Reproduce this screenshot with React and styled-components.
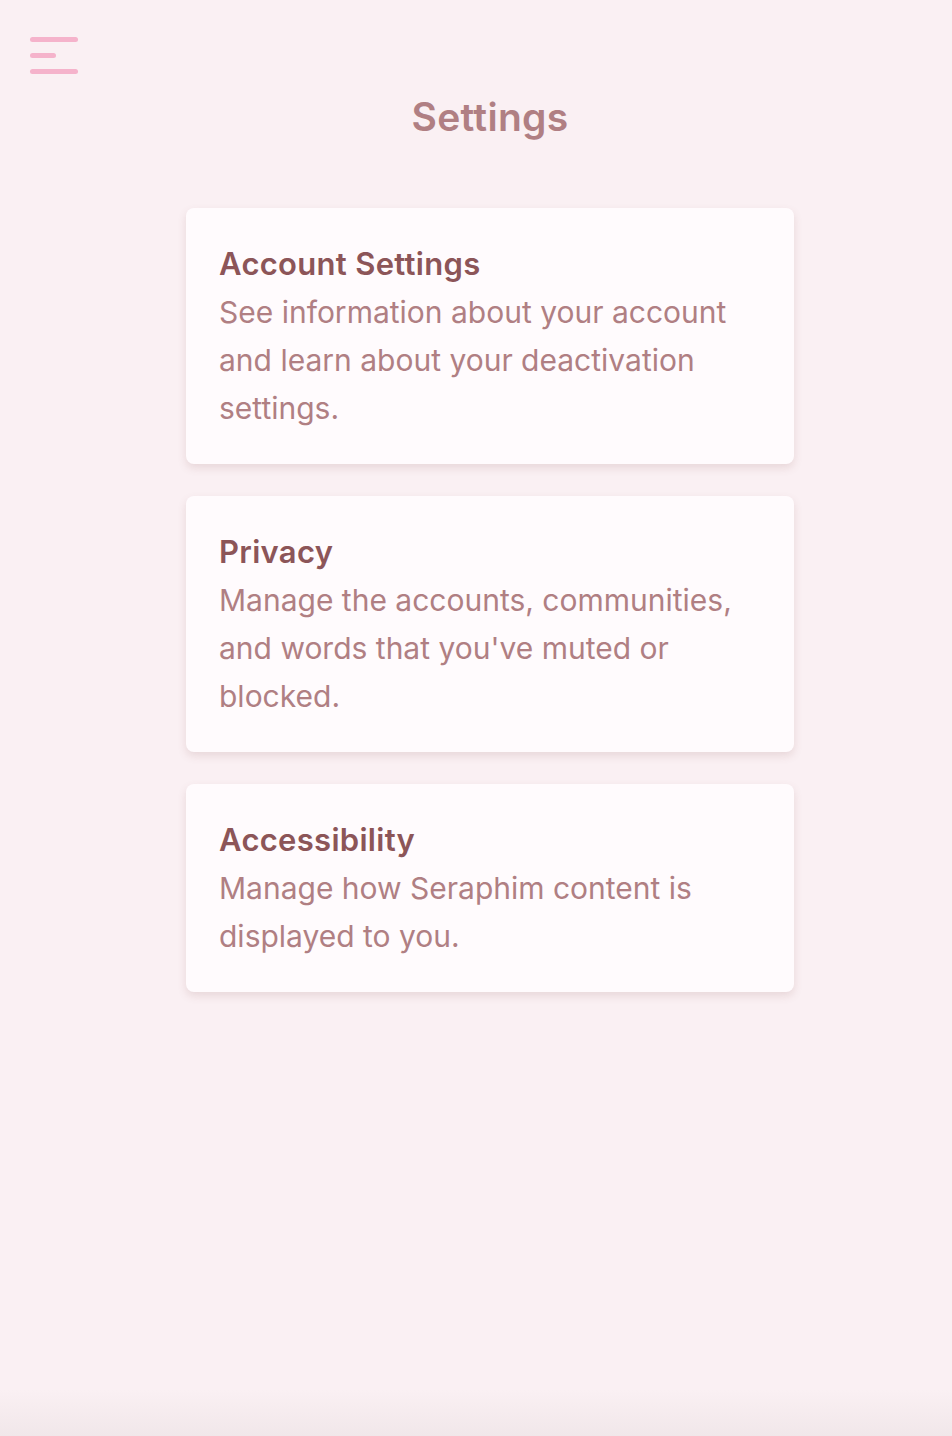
import React from "react";
import styled, { createGlobalStyle } from "styled-components";

const Global = createGlobalStyle`
  html, body {
    margin: 0;
    padding: 0;
    background: #faf0f3;
  }
  body {
    font-family: Inter, "Noto Sans", sans-serif;
  }
`;

const Page = styled.div`
  min-height: 100vh;
  display: flex;
  flex-direction: column;
`;

const TopBar = styled.header`
  padding: 37px 30px 0;
  height: 37px;
`;

const MenuButton = styled.button`
  display: flex;
  flex-direction: column;
  gap: 11px;
  padding: 0;
  border: none;
  background: none;
  cursor: pointer;
`;

const Line = styled.span`
  display: block;
  width: ${(p) => p.$w}px;
  height: 5px;
  border-radius: 3px;
  background: #f5b3cb;
`;

const Main = styled.main`
  flex: 1;
  padding-left: 28px;
  display: flex;
  flex-direction: column;
  align-items: center;
`;

const Title = styled.h1`
  margin: 18px 0 66px;
  font-size: 39px;
  font-weight: 600;
  line-height: 50px;
  color: #b07f83;
  letter-spacing: 0.3px;
`;

const List = styled.div`
  width: 608px;
  display: flex;
  flex-direction: column;
  gap: 32px;
`;

const Card = styled.div`
  background: #fffbfd;
  border-radius: 8px;
  padding: 32px 33px;
  box-shadow: 0 4px 8px rgba(140, 85, 88, 0.16);
  cursor: pointer;
`;

const CardTitle = styled.h2`
  margin: 0;
  font-size: 31px;
  font-weight: 600;
  line-height: 48px;
  color: #8c5558;
  letter-spacing: 0.3px;
`;

const CardText = styled.p`
  margin: 0;
  font-size: 30px;
  font-weight: 400;
  line-height: 48px;
  color: #b07f83;
`;

const BottomShade = styled.div`
  height: 46px;
  background: linear-gradient(to bottom, rgba(230, 220, 222, 0), rgba(230, 220, 222, 0.45));
`;

const items = [
  {
    title: "Account Settings",
    text: "See information about your account and learn about your deactivation settings.",
  },
  {
    title: "Privacy",
    text: "Manage the accounts, communities, and words that you've muted or blocked.",
  },
  {
    title: "Accessibility",
    text: "Manage how Seraphim content is displayed to you.",
  },
];

const App = () => {
  return (
    <Page>
      <Global />
      <TopBar>
        <MenuButton aria-label="Menu">
          <Line $w={48} />
          <Line $w={26} />
          <Line $w={48} />
        </MenuButton>
      </TopBar>
      <Main>
        <Title>Settings</Title>
        <List>
          {items.map((item) => (
            <Card key={item.title}>
              <CardTitle>{item.title}</CardTitle>
              <CardText>{item.text}</CardText>
            </Card>
          ))}
        </List>
      </Main>
      <BottomShade />
    </Page>
  );
};

export default App;
